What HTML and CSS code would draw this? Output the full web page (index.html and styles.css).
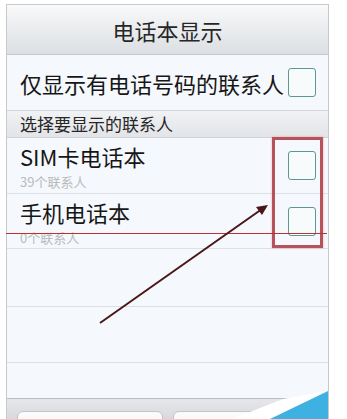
FILE: index.html
```html
<!DOCTYPE html>
<html lang="zh">
<head>
<meta charset="utf-8">
<title>电话本显示</title>
<link rel="stylesheet" href="styles.css">
</head>
<body>
<div class="frame">
  <div class="title">电话本显示</div>
  <div class="row-only">
    <span class="main">仅显示有电话号码的联系人</span>
    <span class="check"></span>
  </div>
  <div class="section">选择要显示的联系人</div>
  <div class="item item-sim">
    <div class="texts">
      <div class="main">SIM卡电话本</div>
      <div class="sub">39个联系人</div>
    </div>
    <span class="check"></span>
  </div>
  <div class="item item-phone">
    <div class="texts">
      <div class="main">手机电话本</div>
      <div class="sub">0个联系人</div>
    </div>
    <span class="check"></span>
  </div>
  <div class="empty e1"></div>
  <div class="empty e2"></div>
  <div class="empty e3"></div>
  <div class="bottom">
    <div class="btn"></div>
    <div class="btn"></div>
  </div>
</div>

<div class="redbox"></div>
<div class="redline"></div>
<svg class="annot" width="347" height="419" viewBox="0 0 347 419">
  <line x1="100" y1="323" x2="262" y2="209" stroke="#4a1616" stroke-width="2"/>
  <polygon points="268,205 256,207 262,215" fill="#4a1616"/>
  <polygon points="232,419 283,399 328,391 328,419" fill="#ffffff"/>
  <polygon points="270,419 328,391 328,419" fill="#3fb0e2"/>
</svg>
</body>
</html>
```
FILE: styles.css
```css
html, body {
  margin: 0;
  padding: 0;
  width: 347px;
  height: 419px;
  overflow: hidden;
  background: #ffffff;
}
body {
  font-family: "Noto Sans CJK SC", "Noto Sans", sans-serif;
  color: #1c1c1c;
  position: relative;
}
.frame {
  margin: 4px 0 0 6px;
  width: 321px;
  height: 415px;
  border: 1px solid #c9c9c9;
  border-bottom: none;
  background: #f5f8fc;
  display: flex;
  flex-direction: column;
  overflow: hidden;
}
.frame > * {
  flex: none;
  box-sizing: content-box;
}
.title {
  height: 49px;
  border-bottom: 1px solid #c4c7cb;
  background: linear-gradient(#f8f9fa, #dcdfe3);
  display: flex;
  align-items: center;
  justify-content: center;
  font-size: 22px;
  line-height: 1;
  color: #262626;
}
.row-only {
  height: 55px;
  border-bottom: 1px solid #d3d6da;
  display: flex;
  align-items: center;
  justify-content: space-between;
  padding: 0 12px 0 13px;
}
.main {
  font-size: 22px;
  line-height: 32px;
  color: #161616;
}
.check {
  width: 26px;
  height: 27px;
  border: 1px solid #5e978f;
  border-radius: 3px;
  background: #f7fbfc;
  flex: none;
}
.section {
  height: 26px;
  border-bottom: 1px solid #cfd2d6;
  background: linear-gradient(#f1f2f4, #e2e4e7);
  font-size: 17px;
  line-height: 26px;
  padding-left: 13px;
  color: #262626;
}
.item {
  display: flex;
  align-items: center;
  justify-content: space-between;
  padding: 0 12px 0 13px;
  border-bottom: 1px solid #dde0e4;
}
.item-sim { height: 55px; }
.item-phone { height: 54px; }
.texts {
  display: flex;
  flex-direction: column;
}
.sub {
  font-size: 13px;
  line-height: 19px;
  color: #b9bbbd;
}
.empty {
  border-bottom: 1px solid #dde0e4;
}
.e1 { height: 57px; }
.e2 { height: 55px; }
.e3 { height: 35px; border-bottom-color: #b9bcc0; }
.frame > .bottom {
  flex: 1 1 auto;
  min-height: 0;
  overflow: hidden;
  background: linear-gradient(#e6e7ea, #d6d8db);
  display: flex;
  gap: 10px;
  padding: 12px 10px 0 10px;
}
.btn {
  flex: 1;
  height: 40px;
  border: 1px solid #c3c5c8;
  border-radius: 6px;
  background: linear-gradient(#fbfbfc, #eceef0);
}
.redbox {
  position: absolute;
  left: 272px;
  top: 137px;
  width: 45px;
  height: 105px;
  border: 3px solid #b5525a;
  box-shadow: 0 0 2px rgba(230, 80, 90, 0.45);
}
.redline {
  position: absolute;
  left: 6px;
  top: 233px;
  width: 321px;
  height: 1px;
  background: #c03030;
}
.annot {
  position: absolute;
  left: 0;
  top: 0;
}
```
